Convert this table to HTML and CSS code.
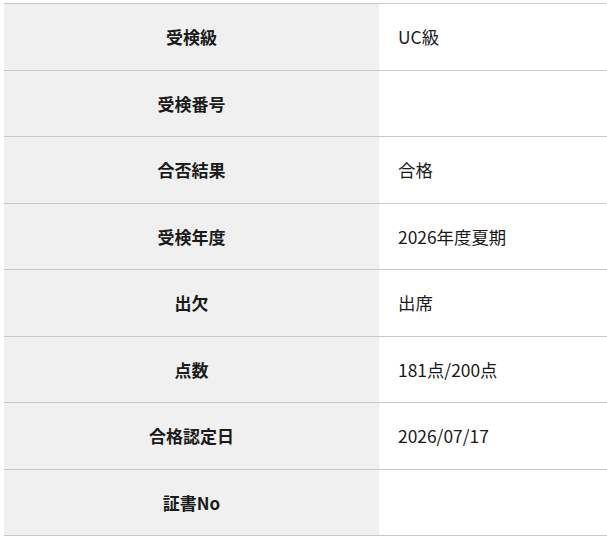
FILE: index.html
```html
<!DOCTYPE html>
<html lang="ja">
<head>
<meta charset="utf-8">
<link rel="stylesheet" href="styles.css">
</head>
<body>
<div class="page">
  <div class="table">
    <div class="row"><div class="th">受検級</div><div class="td">UC級</div></div>
    <div class="row"><div class="th">受検番号</div><div class="td"></div></div>
    <div class="row"><div class="th">合否結果</div><div class="td">合格</div></div>
    <div class="row"><div class="th">受検年度</div><div class="td">2026年度夏期</div></div>
    <div class="row"><div class="th">出欠</div><div class="td">出席</div></div>
    <div class="row"><div class="th">点数</div><div class="td">181点/200点</div></div>
    <div class="row"><div class="th">合格認定日</div><div class="td">2026/07/17</div></div>
    <div class="row"><div class="th">証書No</div><div class="td"></div></div>
  </div>
</div>
</body>
</html>
```
FILE: styles.css
```css
html, body {
  margin: 0;
  padding: 0;
  background: #ffffff;
}
.page {
  padding: 3px 0 0 4px;
  font-family: "Noto Sans CJK JP", "Noto Sans", sans-serif;
  color: #1a1a1a;
}
.table {
  border-top: 1px solid #c8c8c8;
}
.row {
  display: grid;
  grid-template-columns: 375px 1fr;
  height: 66.5px;
  box-sizing: border-box;
  border-bottom: 1px solid #c8c8c8;
}
.th {
  background: #f0f0f0;
  font-weight: 700;
  font-size: 17px;
  display: flex;
  align-items: center;
  justify-content: center;
}
.td {
  font-size: 17.4px;
  display: flex;
  align-items: center;
  padding-left: 19px;
}
```
